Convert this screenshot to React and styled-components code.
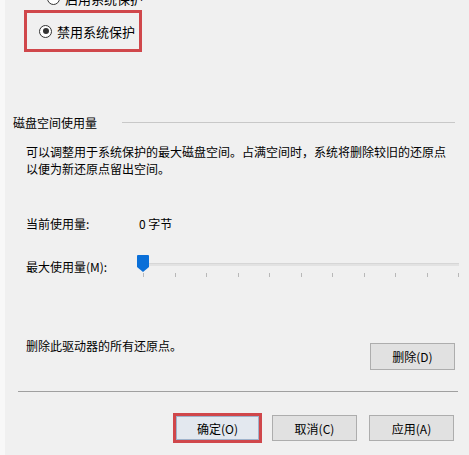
import React from 'react';
import styled, { createGlobalStyle } from 'styled-components';

const GlobalStyle = createGlobalStyle`
  html, body {
    margin: 0;
    padding: 0;
    background: #f0f0f0;
    overflow: hidden;
  }
  body {
    font-family: "Noto Sans CJK SC", "Liberation Sans", sans-serif;
    font-size: 12px;
    color: #000;
  }
`

const Page = styled.div`
  width: 469px;
  height: 455px;
  box-sizing: border-box;
  border-left: 5px solid #f8f8f8;
  padding: 0 14px 0 8px;
  display: flex;
  flex-direction: column;
  overflow: hidden;
`

const RadioRow = styled.label`
  display: flex;
  align-items: center;
  gap: 5px;
  height: 18px;
  margin-left: ${p => p.$indent || 0}px;
  font-size: 13px;
`

const RadioCircle = styled.span`
  width: 11px;
  height: 11px;
  border: 1px solid #333;
  border-radius: 50%;
  background: #fff;
  display: flex;
  align-items: center;
  justify-content: center;
  flex: none;
  &::after {
    content: '';
    width: 6px;
    height: 6px;
    border-radius: 50%;
    background: ${p => (p.$checked ? '#333' : 'transparent')};
  }
`

const TopRow = styled.div`
  margin-top: -11px;
`

const Highlight = styled.div`
  margin: 3px 0 0 11px;
  width: 118px;
  height: 42px;
  box-sizing: border-box;
  border: 3px solid #d0474b;
  display: flex;
  align-items: center;
  padding-left: 12px;
`

const GroupHeader = styled.div`
  display: flex;
  align-items: center;
  gap: 25px;
  margin-top: 61px;
  height: 18px;
  &::after {
    content: '';
    flex: 1;
    height: 1px;
    background: #c8c8c8;
  }
`

const GroupBody = styled.div`
  padding-left: 13px;
  display: flex;
  flex-direction: column;
`

const Paragraph = styled.p`
  margin: 12px 0 0;
  line-height: 17px;
`

const InfoRow = styled.div`
  display: flex;
  align-items: center;
  height: 18px;
  margin-top: ${p => p.$gap || 0}px;
`

const Label = styled.span`
  width: 113px;
  flex: none;
`

const SliderWrap = styled.div`
  flex: 1;
  height: 22px;
  position: relative;
  margin-right: -4px;
`

const Track = styled.div`
  position: absolute;
  left: 6px;
  right: 0;
  top: 8px;
  height: 2px;
  background: #e2e2e2;
  border-top: 1px solid #d6d6d6;
`

const Ticks = styled.div`
  position: absolute;
  left: 4px;
  right: 0;
  top: 18px;
  display: flex;
  justify-content: space-between;
`

const Tick = styled.span`
  width: 1px;
  height: 4px;
  background: #b8b8b8;
`

const Thumb = styled.div`
  position: absolute;
  left: -2px;
  top: 0;
  width: 12px;
  height: 17px;
  background: #0a6fd8;
  border-radius: 1px 1px 0 0;
  clip-path: polygon(0 0, 100% 0, 100% 70%, 50% 100%, 0 70%);
`

const DeleteRow = styled.div`
  display: flex;
  justify-content: space-between;
  align-items: flex-start;
  margin-top: 62px;
  & > button {
    margin-top: 6px;
    height: 27px;
  }
`

const Separator = styled.div`
  height: 1px;
  background: #a0a0a0;
  margin: 21px 0 0 5px;
  width: 440px;
`

const Footer = styled.div`
  display: flex;
  justify-content: flex-end;
  gap: 12px;
  margin-top: 23px;
  margin-right: 1px;
`

const Button = styled.button`
  width: ${p => (p.$focused ? 83 : 85)}px;
  height: ${p => (p.$focused ? 24 : 26)}px;
  box-sizing: border-box;
  font-family: inherit;
  font-size: 12px;
  color: #000;
  background: ${p => (p.$focused ? '#e3e8ef' : '#e1e1e1')};
  border: 1px solid ${p => (p.$focused ? '#9fb3cc' : '#adadad')};
  padding: 0;
  align-self: center;
  outline: ${p => (p.$focused ? '3px solid #d0474b' : 'none')};
  outline-offset: 0;
  margin-right: ${p => (p.$focused ? '1px' : '0')};
`

const Dot = ({ checked }) => <RadioCircle $checked={checked} />

export default function App() {
  const ticks = Array.from({ length: 11 })
  return (
    <>
      <GlobalStyle />
      <Page>
        <TopRow>
          <RadioRow $indent={34}>
            <Dot />
            启用系统保护
          </RadioRow>
        </TopRow>
        <Highlight>
          <RadioRow>
            <Dot checked />
            禁用系统保护
          </RadioRow>
        </Highlight>

        <GroupHeader>磁盘空间使用量</GroupHeader>
        <GroupBody>
          <Paragraph>
            可以调整用于系统保护的最大磁盘空间。占满空间时，系统将删除较旧的还原点
            <br />
            以便为新还原点留出空间。
          </Paragraph>
          <InfoRow $gap={37}>
            <Label>当前使用量:</Label>
            <span>0 字节</span>
          </InfoRow>
          <InfoRow $gap={25}>
            <Label>最大使用量(M):</Label>
            <SliderWrap>
              <Track />
              <Ticks>
                {ticks.map((_, i) => (
                  <Tick key={i} />
                ))}
              </Ticks>
              <Thumb />
            </SliderWrap>
          </InfoRow>
          <DeleteRow>
            <span>删除此驱动器的所有还原点。</span>
            <Button>删除(D)</Button>
          </DeleteRow>
        </GroupBody>
        <Separator />
        <Footer>
          <Button $focused>确定(O)</Button>
          <Button>取消(C)</Button>
          <Button>应用(A)</Button>
        </Footer>
      </Page>
    </>
  )
}
